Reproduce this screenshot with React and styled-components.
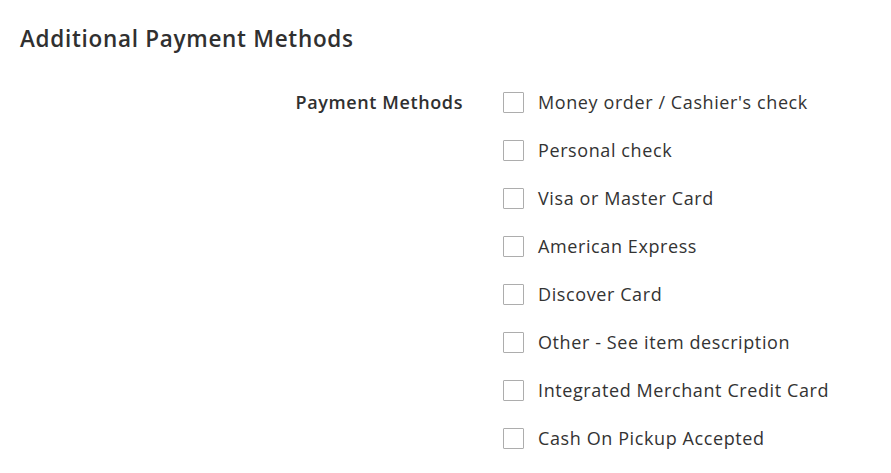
import React from "react";
import styled, { createGlobalStyle } from "styled-components";

const Global = createGlobalStyle`
  html, body { margin: 0; padding: 0; background: #fff; }
  body { font-family: "Open Sans", "Noto Sans", sans-serif; color: #333; }
`;

const Page = styled.div`
  padding: 24px 20px 0 20px;
`;

const Title = styled.h2`
  margin: 0;
  font-size: 22.5px;
  font-weight: 600;
  color: #303030;
  letter-spacing: 0.7px;
  line-height: 30px;
`;

const Field = styled.div`
  display: grid;
  grid-template-columns: 443px 1fr;
  column-gap: 40px;
  margin-top: 36px;
`;

const Label = styled.div`
  text-align: right;
  font-size: 18px;
  font-weight: 600;
  color: #303030;
  letter-spacing: 0.6px;
  line-height: 24px;
`;

const Options = styled.div`
  display: flex;
  flex-direction: column;
  gap: 24px;
`;

const Option = styled.label`
  display: flex;
  align-items: center;
  gap: 14px;
  height: 24px;
  font-size: 18px;
  letter-spacing: 0.6px;
  color: #333;
`;

const Box = styled.span`
  width: 19px;
  height: 19px;
  border: 1px solid #adadad;
  border-radius: 1px;
  background: #fff;
  flex-shrink: 0;
`;

const items = [
  "Money order / Cashier's check",
  "Personal check",
  "Visa or Master Card",
  "American Express",
  "Discover Card",
  "Other - See item description",
  "Integrated Merchant Credit Card",
  "Cash On Pickup Accepted",
];

export default function App() {
  return (
    <>
      <Global />
      <Page>
        <Title>Additional Payment Methods</Title>
        <Field>
          <Label>Payment Methods</Label>
          <Options>
            {items.map((t) => (
              <Option key={t}>
                <Box />
                {t}
              </Option>
            ))}
          </Options>
        </Field>
      </Page>
    </>
  );
}
